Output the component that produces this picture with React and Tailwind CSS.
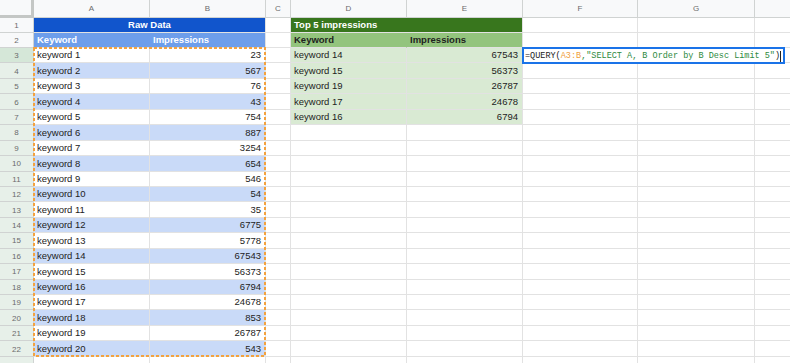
import React from "react";

const COLS = [
  { key: "A", w: 116 },
  { key: "B", w: 116 },
  { key: "C", w: 25 },
  { key: "D", w: 116 },
  { key: "E", w: 116 },
  { key: "F", w: 115 },
  { key: "G", w: 117 },
  { key: "", w: 120 }, // H is off screen
];

const rawData = [
  ["keyword 1", 23], ["keyword 2", 567], ["keyword 3", 76], ["keyword 4", 43],
  ["keyword 5", 754], ["keyword 6", 887], ["keyword 7", 3254], ["keyword 8", 654],
  ["keyword 9", 546], ["keyword 10", 54], ["keyword 11", 35], ["keyword 12", 6775],
  ["keyword 13", 5778], ["keyword 14", 67543], ["keyword 15", 56373], ["keyword 16", 6794],
  ["keyword 17", 24678], ["keyword 18", 853], ["keyword 19", 26787], ["keyword 20", 543],
];

const top5 = [
  ["keyword 14", 67543], ["keyword 15", 56373], ["keyword 19", 26787],
  ["keyword 17", 24678], ["keyword 16", 6794],
];

// sheets cells sit text at the bottom by default
function Cell({ w, className = "", children }) {
  return (
    <div
      style={{ width: w }}
      className={"shrink-0 h-full border-r border-b border-[#e2e2e2] flex items-end pb-[1px] leading-[12px] px-[3px] overflow-visible whitespace-nowrap " + className}
    >
      {children}
    </div>
  );
}

function RowHead({ n, active, tinted }) {
  return (
    <div
      className={
        "w-[34px] shrink-0 h-full border-r border-b border-[#d0d3d2] flex items-center justify-center pt-[2px] text-[8px] text-[#6b6b6b] " +
        (active ? "bg-[#d5e7d8]" : tinted ? "bg-[#e7f0e9]" : "bg-[#f8f9fa]")
      }
    >
      {n}
    </div>
  );
}

function Formula() {
  return (
    <div className="absolute left-[-1px] top-[-1px] w-[263px] h-[17px] z-10 bg-white border-2 border-[#1a73e8] flex items-center pl-[1px] pt-[1px] font-['Liberation_Mono',monospace] text-[8.5px] whitespace-nowrap">
      <span className="text-[#222]">=QUERY(</span>
      <span className="text-[#f09d3a]">A3:B</span>
      <span className="text-[#2d8a3e]">,"SELECT A, B Order by B Desc Limit 5"</span>
      <span className="text-[#222]">)</span>
      <span className="inline-block w-px h-[11px] bg-[#222]" />
    </div>
  );
}

export default function App() {
  const rows = [];
  for (let r = 1; r <= 23; r++) rows.push(r);

  return (
    <div className="w-[790px] h-[363px] overflow-hidden bg-white font-['Liberation_Sans',Arial,sans-serif] text-[9.5px] text-[#222]">
      {/* column headers */}
      <div className="flex h-[18px]">
        <div className="w-[34px] shrink-0 h-full bg-[#f8f9fa] border-r-[3px] border-b-[3px] border-[#c4c7c5]" />
        {COLS.map((c, i) => (
          <div
            key={i}
            style={{ width: c.w }}
            className="shrink-0 h-full bg-[#f8f9fa] border-r border-b border-[#d0d3d2] flex items-center justify-center text-[8px] text-[#6b6b6b]"
          >
            {c.key}
          </div>
        ))}
      </div>

      {rows.map((r) => {
        const h = r <= 2 ? "h-[15px]" : "h-[15.45px]";
        const raw = r >= 3 && r <= 22 ? rawData[r - 3] : null;
        const t = r >= 3 && r <= 7 ? top5[r - 3] : null;
        const blue = raw && r % 2 === 0;
        return (
          <div key={r} className={"flex " + h}>
            <RowHead n={r <= 22 ? r : ""} active={r === 3} tinted={r >= 3} />

            {r === 1 && (
              <Cell w={232} className="bg-[#1155cc] border-[#1155cc] justify-center font-bold text-white">
                Raw Data
              </Cell>
            )}
            {r === 2 && (
              <>
                <Cell w={116} className="bg-[#6d9eeb] border-r-[#6d9eeb] font-bold text-white">Keyword</Cell>
                <Cell w={116} className="bg-[#6d9eeb] font-bold text-white">Impressions</Cell>
              </>
            )}
            {r >= 3 && (
              <>
                <Cell w={116} className={"relative " + (blue ? "bg-[#c9daf8]" : "")}>
                  {raw && raw[0]}
                  {r === 3 && (
                    <svg className="absolute left-[-1px] top-[-1px] z-10 pointer-events-none" width="234" height="311">
                      <rect x="1" y="1" width="231" height="308" fill="none" stroke="#f3a23f" strokeWidth="2" strokeDasharray="3 2" />
                    </svg>
                  )}
                </Cell>
                <Cell w={116} className={"justify-end pr-[4px] " + (blue ? "bg-[#c9daf8]" : "")}>
                  {raw && raw[1]}
                </Cell>
              </>
            )}

            <Cell w={25} />

            {r === 1 && (
              <Cell w={232} className="bg-[#38761d] border-[#38761d] font-bold text-white">
                Top 5 impressions
              </Cell>
            )}
            {r === 2 && (
              <>
                <Cell w={116} className="bg-[#93c47d] border-r-[#93c47d] font-bold text-[#1f1f1f]">Keyword</Cell>
                <Cell w={116} className="bg-[#93c47d] font-bold text-[#1f1f1f]">Impressions</Cell>
              </>
            )}
            {r >= 3 && (
              <>
                <Cell w={116} className={t ? "bg-[#d9ead3]" : ""}>{t && t[0]}</Cell>
                <Cell w={116} className={"justify-end pr-[4px] " + (t ? "bg-[#d9ead3]" : "")}>{t && t[1]}</Cell>
              </>
            )}

            <Cell w={115} className="relative">{r === 3 && <Formula />}</Cell>
            <Cell w={117} />
            <Cell w={120} />
          </div>
        );
      })}
    </div>
  );
}
